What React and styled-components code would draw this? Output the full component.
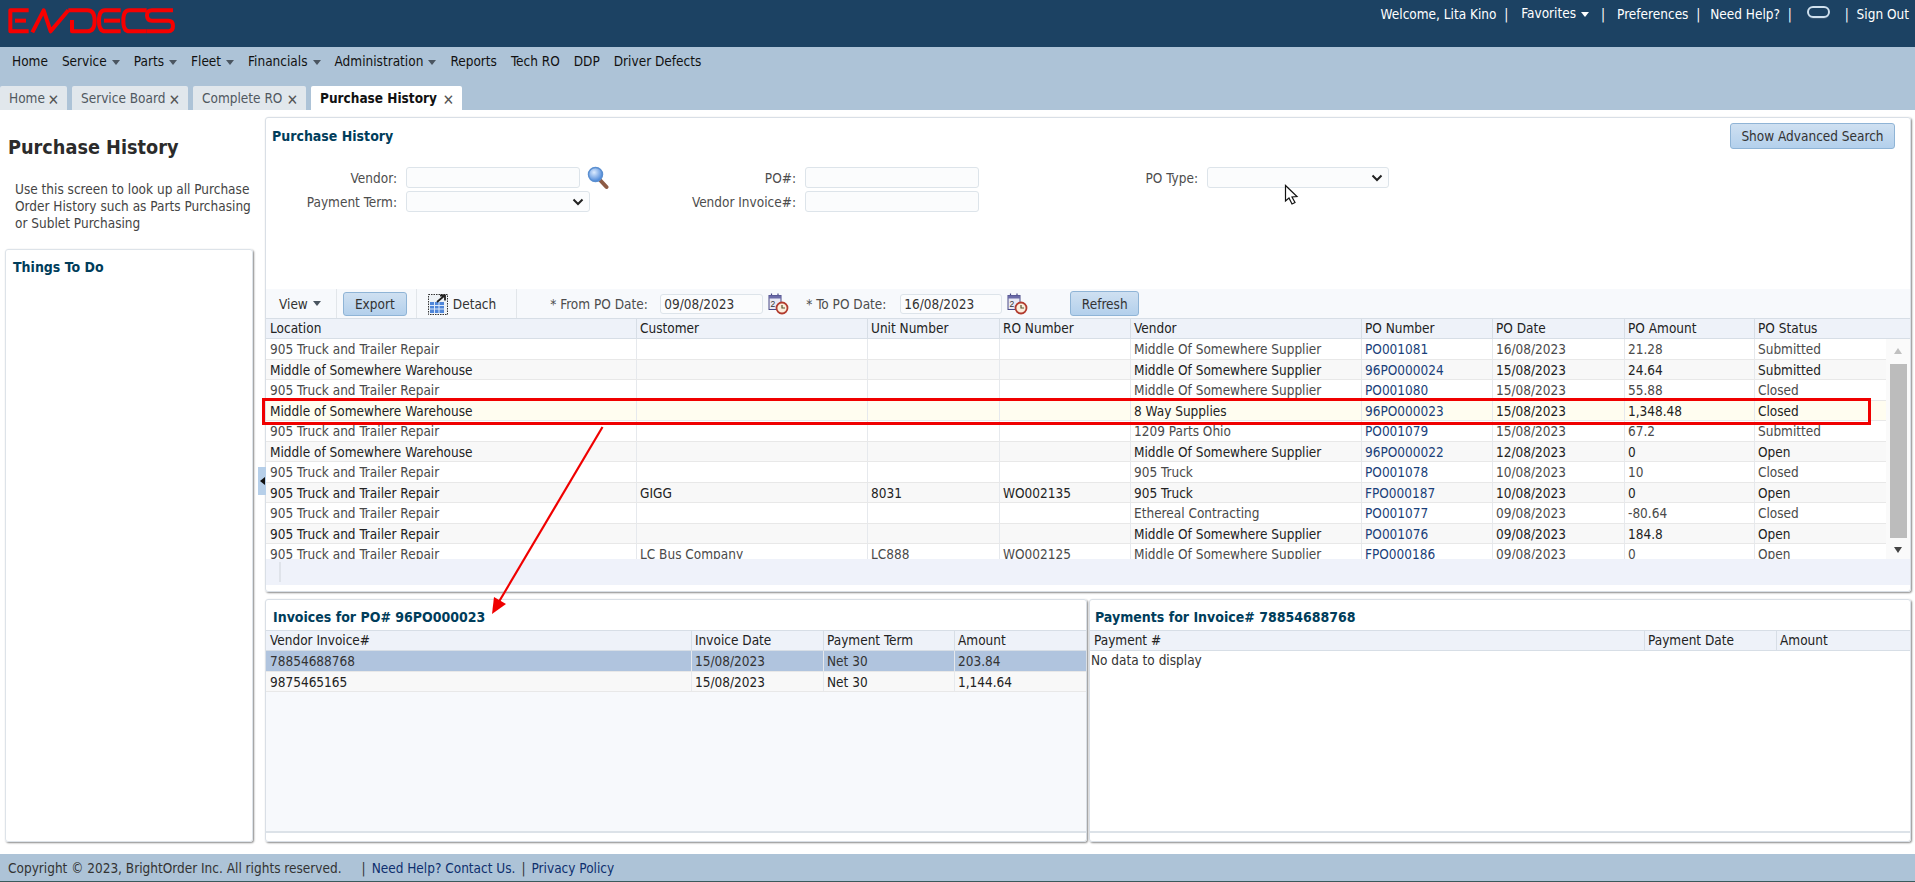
import React from "react";
import styled, { createGlobalStyle } from "styled-components";

const FONT = `"DejaVu Sans Condensed", "Liberation Sans", Arial, sans-serif`;

const GlobalStyle = createGlobalStyle`
  html, body { margin: 0; padding: 0; background: #fff; height: 100%; overflow: hidden; }
  body { font-family: ${FONT}; font-size: 13.5px; color: #333; }
  * { box-sizing: border-box; }
`;

const Page = styled.div`position: relative; width: 1915px; height: 882px; overflow: hidden; display: flex; flex-direction: column;`;
const TopBar = styled.header`height: 47px; background: #1c4263; display: flex; justify-content: space-between; padding: 0 6px 0 8px; flex: none;`;
const LogoMark = styled.svg`width: 170px; height: 33px; margin-top: 5px; display: block;`;
const UserLinks = styled.div`display: flex; align-items: flex-start; padding-top: 7px; color: #fff; line-height: 15px;`;
const UserItem = styled.span`white-space: nowrap; margin-left: ${p => p.$ml || 0}px; position: relative; top: ${p => p.$top || 0}px;`;
const WhiteCaret = styled.i`display: inline-block; border: 4px solid transparent; border-top: 5px solid #fff; border-bottom: 0; margin-left: 5px; vertical-align: middle;`;
const RingIcon = styled.span`display: block; width: 23px; height: 12px; border: 2px solid #cfe0ee; border-radius: 6px; margin: -1px 0 0 15px; box-shadow: 0 2px 1px -1px #3d5a75;`;

const NavArea = styled.div`height: 63px; background: #adc3d7; flex: none; display: flex; flex-direction: column;`;
const Menu = styled.nav`height: 28px; display: flex; align-items: center; padding-left: 12px; gap: 14px; color: #111;`;
const MenuItem = styled.span`white-space: nowrap;`;
const DarkCaret = styled.i`display: inline-block; border: 4px solid transparent; border-top: 5px solid #4a5560; border-bottom: 0; margin-left: 5px; vertical-align: middle;`;
const Tabs = styled.div`height: 24px; margin-top: 11px; display: flex; gap: 5px;`;
const Tab = styled.div`
  width: ${p => p.$w}px; height: 24px; border-radius: 2px 2px 0 0; display: flex; align-items: center; justify-content: space-between; padding: 0 8px 0 9px;
  background: ${p => (p.$active ? "#fff" : "#e1e7ec")}; color: ${p => (p.$active ? "#111" : "#50585f")}; font-weight: ${p => (p.$active ? 700 : 400)}; white-space: nowrap;
`;
const CloseMark = styled.span`font-size: 15px; color: #555; line-height: 1; margin-top: 4px; font-weight: 400;`;

const Main = styled.main`height: 744px; flex: none; display: flex;`;
const Sidebar = styled.aside`width: 265px; flex: none; display: flex; flex-direction: column; padding: 7px 12px 12px 5px;`;
const PageTitle = styled.h1`margin: 16px 0 0 3px; font-size: 19.7px; line-height: 30px; font-weight: 700; color: #2b2b2b; white-space: nowrap;`;
const Intro = styled.p`margin: 18px 0 0 10px; font-size: 13.5px; line-height: 17px; color: #444;`;
const TodoPanel = styled.section`flex: 1; margin-top: 17px; border: 1px solid #dde3e9; border-radius: 3px; box-shadow: 1px 1px 2px #888; padding: 9px 7px;`;
const PanelHeading = styled.h2`margin: 0; font-size: 14px; line-height: 17px; font-weight: 700; color: #003d5b; white-space: nowrap;`;

const Content = styled.div`flex: 1; display: flex; flex-direction: column; gap: 7px; padding: 7px 4px 12px 0;`;
const TopPanel = styled.section`height: 475px; flex: none; border: 1px solid #d9dfe6; border-radius: 3px; box-shadow: 1px 1px 2px #888; display: flex; flex-direction: column;`;
const SearchArea = styled.div`height: 171px; flex: none; position: relative; padding: 5px 15px 0 6px;`;
const TitleRow = styled.div`display: flex; justify-content: space-between; align-items: flex-start; height: 44px;`;
const Button = styled.button`
  font: inherit; color: #333; height: ${p => p.$h || 25}px; width: ${p => p.$w}px; flex: none; padding: 0; border: 1px solid #8fb4d6; border-radius: 3px;
  background: linear-gradient(#cfe0f1, #b3d0ec); white-space: nowrap; margin-left: ${p => p.$ml || 0}px;
`;
const FormRowGroup = styled.div`display: flex; margin-left: -6px;`;
const FormColumn = styled.div`width: 400px; display: flex; flex-direction: column; gap: 3px;`;
const Field = styled.div`display: flex; align-items: center; height: 21px;`;
const FieldLabel = styled.label`width: ${p => p.$w}px; margin-right: 9px; text-align: right; color: #4d4d4d; white-space: nowrap; flex: none;`;
const TextInput = styled.div`width: ${p => p.$w || 174}px; height: ${p => p.$h || 21}px; background: #fbfcfd; border: 1px solid #dde4ea; border-radius: 3px; flex: none; padding: 0 3px; line-height: 19px; color: #333;`;
const SelectBox = styled.div`width: ${p => p.$w}px; height: 21px; background: #fbfcfd; border: 1px solid #dde4ea; border-radius: 3px; flex: none; display: flex; align-items: center; justify-content: flex-end; padding-right: 5px;`;

const Toolbar = styled.div`height: 29px; flex: none; background: #f7f9fc; display: flex; align-items: center; padding-left: 13px; color: #333;`;
const ToolText = styled.span`white-space: nowrap; margin-left: ${p => p.$ml || 0}px; color: #333;`;
const DateLabel = styled.span`white-space: nowrap; width: ${p => p.$w}px; flex: none; margin-left: ${p => p.$ml || 0}px; color: #4d4d4d;`;
const ToolSep = styled.span`width: 1px; height: 29px; background: #e2e6ea; flex: none; margin-left: ${p => p.$ml || 0}px;`;

const GridHead = styled.div`display: flex; height: 21px; flex: none; background: #eef2f9; border-top: 1px solid #d7dee6; border-bottom: 1px solid #d7dee6;`;
const Row = styled.div`display: flex; height: 20.5px; flex: none; border-bottom: 1px solid #e8e8e8; background: ${p => p.$bg};`;
const Cell = styled.div`
  width: ${p => p.$w}px; flex: none; padding-left: ${p => (p.$first ? 4 : 3)}px; white-space: nowrap; overflow: hidden; border-left: ${p => (p.$first ? "0" : "1px solid #e6e9ed")}; line-height: 21px;
  color: ${p => p.$c};
`;
const HeadCell = styled(Cell)`color: #222; border-left: ${p => (p.$first ? "0" : "1px solid #d7dee6")}; line-height: 19px;`;
const HeadFill = styled.div`flex: 1;`;
const GridBody = styled.div`height: 220px; flex: none; display: flex; overflow: hidden;`;
const Rows = styled.div`width: 1620px; flex: none; display: flex; flex-direction: column;`;
const Scrollbar = styled.div`flex: 1; position: relative; display: flex; flex-direction: column; align-items: center; padding: 9px 3px 6px 3px; justify-content: space-between; background: #fafafa;`;
const ScrollThumb = styled.div`width: 17px; height: 174px; background: #bcbcbc; flex: none;`;
const ArrowUp = styled.i`border: 4px solid transparent; border-bottom: 6px solid #c0c0c0; border-top: 0;`;
const ArrowDown = styled.i`border: 4px solid transparent; border-top: 6px solid #444; border-bottom: 0;`;
const StatusStrip = styled.div`height: 26px; flex: none; background: #eff2fa; padding: 3px 0 3px 13px;`;
const StripTick = styled.div`width: 2px; height: 20px; background: #dfe3ea;`;

const BottomRow = styled.div`flex: 1; display: flex; gap: 2px; min-height: 0;`;
const DetailPanel = styled.section`width: ${p => p.$w}px; flex: none; border: 1px solid #d9dfe6; border-radius: 3px; box-shadow: 1px 1px 2px #888; display: flex; flex-direction: column; overflow: hidden;`;
const DetailTitle = styled.div`height: 30px; flex: none; padding: 9px 0 0 ${p => p.$pad}px;`;
const DetailBody = styled.div`flex: 1; background: #f7f9fc; border-bottom: 2px solid #dce2e8; margin-bottom: 8px; display: flex; flex-direction: column;`;
const EmptyNote = styled.div`padding: 0 1px; background: #fff; flex: 1; line-height: 19px; color: #333;`;

const Collapse = styled.div`position: absolute; left: 258px; top: 467px; width: 8px; height: 28px; background: #b6cfe9; display: flex; align-items: center; justify-content: center;`;
const CollapseTip = styled.i`border: 4px solid transparent; border-right: 5px solid #111; border-left: 0;`;
const Overlay = styled.svg`position: absolute; left: 0; top: 0; width: 1915px; height: 882px; pointer-events: none;`;

const Footer = styled.footer`height: 28px; flex: none; background: #adc3d7; border-bottom: 1px solid #3b5a5c; display: flex; align-items: center; padding-left: 8px; color: #333; white-space: nowrap;`;
const FooterLink = styled.span`color: #0d2f6e;`;
const FooterSep = styled.span`margin: 0 6px 0 ${p => p.$ml || 6}px; color: #333;`;

const mainCols = [370, 231, 132, 131, 231, 131, 132, 130, 132];
const mainHead = ["Location", "Customer", "Unit Number", "RO Number", "Vendor", "PO Number", "PO Date", "PO Amount", "PO Status"];
const T = "905 Truck and Trailer Repair", W = "Middle of Somewhere Warehouse", S = "Middle Of Somewhere Supplier";
const mainRows = [
  [T, "", "", "", S, "PO001081", "16/08/2023", "21.28", "Submitted"],
  [W, "", "", "", S, "96PO000024", "15/08/2023", "24.64", "Submitted"],
  [T, "", "", "", S, "PO001080", "15/08/2023", "55.88", "Closed"],
  [W, "", "", "", "8 Way Supplies", "96PO000023", "15/08/2023", "1,348.48", "Closed"],
  [T, "", "", "", "1209 Parts Ohio", "PO001079", "15/08/2023", "67.2", "Submitted"],
  [W, "", "", "", S, "96PO000022", "12/08/2023", "0", "Open"],
  [T, "", "", "", "905 Truck", "PO001078", "10/08/2023", "10", "Closed"],
  [T, "GIGG", "8031", "WO002135", "905 Truck", "FPO000187", "10/08/2023", "0", "Open"],
  [T, "", "", "", "Ethereal Contracting", "PO001077", "09/08/2023", "-80.64", "Closed"],
  [T, "", "", "", S, "PO001076", "09/08/2023", "184.8", "Open"],
  [T, "LC Bus Company", "LC888", "WO002125", S, "FPO000186", "09/08/2023", "0", "Open"],
];
const invoiceCols = [425, 132, 131, 130];

const Chevron = () => (
  <svg width="12" height="8" viewBox="0 0 12 8"><path d="M1.5 1.5 L6 6 L10.5 1.5" fill="none" stroke="#222" strokeWidth="2" /></svg>
);

const Magnifier = () => (
  <svg width="22" height="24" viewBox="0 0 22 24" style={{ marginLeft: 7, flex: "none" }}>
    <defs>
      <radialGradient id="lens" cx="40%" cy="35%" r="70%"><stop offset="0" stopColor="#dcebff" /><stop offset="1" stopColor="#3f7fd6" /></radialGradient>
    </defs>
    <path d="M13 14 L19.5 21" stroke="#8d5b45" strokeWidth="4" strokeLinecap="round" />
    <circle cx="8.5" cy="8.5" r="7" fill="url(#lens)" stroke="#5b8fd0" strokeWidth="1.5" />
  </svg>
);

const DetachIcon = () => (
  <svg width="20" height="24" viewBox="0 0 20 24" style={{ flex: "none", marginLeft: 11 }}>
    <rect x="0.5" y="2.5" width="19" height="20" fill="#eef2f6" stroke="#333" strokeDasharray="1.5 1" />
    <rect x="2" y="10" width="14" height="11" fill="#4f86d9" />
    <path d="M2 13.5H16M2 17H16M6.5 10V21M11 10V21" stroke="#dbe8fa" strokeWidth="1" />
    <path d="M9 10 L16 4 M12 3.5 H17 V8.5" fill="none" stroke="#222" strokeWidth="1.8" />
  </svg>
);

const CalendarIcon = () => (
  <svg width="21" height="22" viewBox="0 0 21 22" style={{ flex: "none", marginLeft: 5 }}>
    <path d="M3.5 0.5V4M10 0.5V4" stroke="#4a4a86" strokeWidth="1.2" />
    <rect x="1" y="2.5" width="12" height="14" fill="#e9e9f4" stroke="#4a4a86" />
    <rect x="1" y="2.5" width="12" height="3" fill="#6b6ba8" />
    <text x="2.5" y="14" fontSize="8.5" fontFamily="Liberation Sans" fill="#333">2</text>
    <circle cx="14" cy="15" r="5.5" fill="#fbeedd" stroke="#b23b2e" strokeWidth="1.8" />
    <path d="M14 12 V15 H17" fill="none" stroke="#553" strokeWidth="1.2" />
  </svg>
);

const HeaderCells = ({ cols, head }) => head.map((h, i) => <HeadCell key={h} $w={cols[i]} $first={i === 0}>{h}</HeadCell>);

export default function App() {
  return (
    <Page>
      <GlobalStyle />
      <TopBar>
        <LogoMark viewBox="0 0 170 33" aria-label="EMDECS">
          <g transform="translate(-8 -5) scale(0.3333)" fill="none" stroke="#f70000" strokeWidth="12" strokeLinejoin="round">
            <path d="M86 31H31V94H86" /><path d="M45 62H78" />
            <path d="M97 97L131 31L152 94L205 31" />
            <path d="M205 31H262Q284 31 284 62Q284 94 262 94H216V60" />
            <path d="M362 31H315Q297 31 297 62Q297 94 315 94H362" /><path d="M312 62H360" />
            <path d="M440 31H388Q370 31 370 62Q370 94 388 94H440" />
            <path d="M519 31H456Q441 31 441 46Q441 62 456 62H505Q519 62 519 78Q519 94 505 94H440" />
          </g>
        </LogoMark>
        <UserLinks>
          <UserItem>Welcome, Lita Kino&nbsp; |</UserItem>
          <UserItem $ml={13} $top={-1}>Favorites<WhiteCaret /></UserItem>
          <UserItem $ml={12}>|</UserItem>
          <UserItem $ml={12}>Preferences&nbsp; |</UserItem>
          <UserItem $ml={10}>Need Help?&nbsp; |</UserItem>
          <RingIcon />
          <UserItem $ml={15}>|&nbsp; Sign Out</UserItem>
        </UserLinks>
      </TopBar>
      <NavArea>
        <Menu>
          <MenuItem>Home</MenuItem>
          <MenuItem>Service<DarkCaret /></MenuItem>
          <MenuItem>Parts<DarkCaret /></MenuItem>
          <MenuItem>Fleet<DarkCaret /></MenuItem>
          <MenuItem>Financials<DarkCaret /></MenuItem>
          <MenuItem>Administration<DarkCaret /></MenuItem>
          <MenuItem>Reports</MenuItem>
          <MenuItem>Tech RO</MenuItem>
          <MenuItem>DDP</MenuItem>
          <MenuItem>Driver Defects</MenuItem>
        </Menu>
        <Tabs>
          <Tab $w={67}>Home<CloseMark>✕</CloseMark></Tab>
          <Tab $w={116}>Service Board<CloseMark>✕</CloseMark></Tab>
          <Tab $w={113}>Complete RO<CloseMark>✕</CloseMark></Tab>
          <Tab $w={151} $active>Purchase History<CloseMark>✕</CloseMark></Tab>
        </Tabs>
      </NavArea>
      <Main>
        <Sidebar>
          <PageTitle>Purchase History</PageTitle>
          <Intro>Use this screen to look up all Purchase Order History such as Parts Purchasing or Sublet Purchasing</Intro>
          <TodoPanel><PanelHeading>Things To Do</PanelHeading></TodoPanel>
        </Sidebar>
        <Content>
          <TopPanel>
            <SearchArea>
              <TitleRow>
                <PanelHeading style={{ marginTop: 5 }}>Purchase History</PanelHeading>
                <Button $w={165} $h={26}>Show Advanced Search</Button>
              </TitleRow>
              <FormRowGroup>
                <FormColumn>
                  <Field><FieldLabel $w={131}>Vendor:</FieldLabel><TextInput /><Magnifier /></Field>
                  <Field><FieldLabel $w={131}>Payment Term:</FieldLabel><SelectBox $w={184}><Chevron /></SelectBox></Field>
                </FormColumn>
                <FormColumn>
                  <Field><FieldLabel $w={130}>PO#:</FieldLabel><TextInput /></Field>
                  <Field><FieldLabel $w={130}>Vendor Invoice#:</FieldLabel><TextInput /></Field>
                </FormColumn>
                <FormColumn>
                  <Field><FieldLabel $w={132}>PO Type:</FieldLabel><SelectBox $w={182}><Chevron /></SelectBox></Field>
                </FormColumn>
              </FormRowGroup>
            </SearchArea>
            <Toolbar>
              <ToolText>View</ToolText><DarkCaret />
              <ToolSep $ml={15} />
              <Button $w={64} $h={24} $ml={6}>Export</Button>
              <ToolSep $ml={9} />
              <DetachIcon />
              <ToolText $ml={5}>Detach</ToolText>
              <ToolSep $ml={20} />
              <DateLabel $w={110} $ml={33}>* From PO Date:</DateLabel>
              <TextInput $w={103} $h={20}>09/08/2023</TextInput>
              <CalendarIcon />
              <DateLabel $w={94} $ml={17}>* To PO Date:</DateLabel>
              <TextInput $w={102} $h={20}>16/08/2023</TextInput>
              <CalendarIcon />
              <Button $w={69} $h={25} $ml={42}>Refresh</Button>
            </Toolbar>
            <GridHead>
              <HeaderCells cols={mainCols} head={mainHead} />
              <HeadFill />
            </GridHead>
            <GridBody>
              <Rows>
                {mainRows.map((r, i) => {
                  const highlighted = i === 3;
                  const alt = i % 2 === 1;
                  const text = alt ? "#222" : "#4a4a4a";
                  return (
                    <Row key={i} $bg={highlighted ? "#fffdf0" : alt ? "#f8f8f8" : "#fff"}>
                      {r.map((c, j) => (
                        <Cell key={j} $w={mainCols[j]} $first={j === 0} $c={j === 5 ? "#1a3f7a" : text}>{c}</Cell>
                      ))}
                    </Row>
                  );
                })}
              </Rows>
              <Scrollbar><ArrowUp /><ScrollThumb /><ArrowDown /></Scrollbar>
            </GridBody>
            <StatusStrip><StripTick /></StatusStrip>
          </TopPanel>
          <BottomRow>
            <DetailPanel $w={822}>
              <DetailTitle $pad={7}><PanelHeading>Invoices for PO# 96PO000023</PanelHeading></DetailTitle>
              <DetailBody>
                <GridHead>
                  <HeaderCells cols={invoiceCols} head={["Vendor Invoice#", "Invoice Date", "Payment Term", "Amount"]} />
                  <HeadFill />
                </GridHead>
                <Row $bg="#b0c4de">
                  {["78854688768", "15/08/2023", "Net 30", "203.84"].map((c, j) => <Cell key={j} $w={invoiceCols[j]} $first={j === 0} $c="#333">{c}</Cell>)}
                </Row>
                <Row $bg="#f8f8f8">
                  {["9875465165", "15/08/2023", "Net 30", "1,144.64"].map((c, j) => <Cell key={j} $w={invoiceCols[j]} $first={j === 0} $c="#222">{c}</Cell>)}
                </Row>
              </DetailBody>
            </DetailPanel>
            <DetailPanel $w={822}>
              <DetailTitle $pad={5}><PanelHeading>Payments for Invoice# 78854688768</PanelHeading></DetailTitle>
              <DetailBody>
                <GridHead>
                  <HeaderCells cols={[554, 132, 130]} head={["Payment #", "Payment Date", "Amount"]} />
                  <HeadFill />
                </GridHead>
                <EmptyNote>No data to display</EmptyNote>
              </DetailBody>
            </DetailPanel>
          </BottomRow>
        </Content>
      </Main>
      <Footer>
        <span>Copyright © 2023, BrightOrder Inc. All rights reserved.</span>
        <FooterSep $ml={20}>|</FooterSep>
        <FooterLink>Need Help? Contact Us.</FooterLink>
        <FooterSep>|</FooterSep>
        <FooterLink>Privacy Policy</FooterLink>
      </Footer>
      <Collapse><CollapseTip /></Collapse>
      <Overlay viewBox="0 0 1915 882">
        <rect x="263.5" y="399.5" width="1606" height="24" fill="none" stroke="#f00000" strokeWidth="3" />
        <path d="M602.5 427 L497 605" stroke="#f00000" strokeWidth="2.2" fill="none" />
        <path d="M492 614 L494 597 L506 604 Z" fill="#f00000" />
        <path d="M1285.5 185.5 V201 L1289 198 L1292 204 L1295 202.5 L1292 197 L1297 196.5 Z" fill="#fff" stroke="#111" strokeWidth="1.2" />
      </Overlay>
    </Page>
  );
}
